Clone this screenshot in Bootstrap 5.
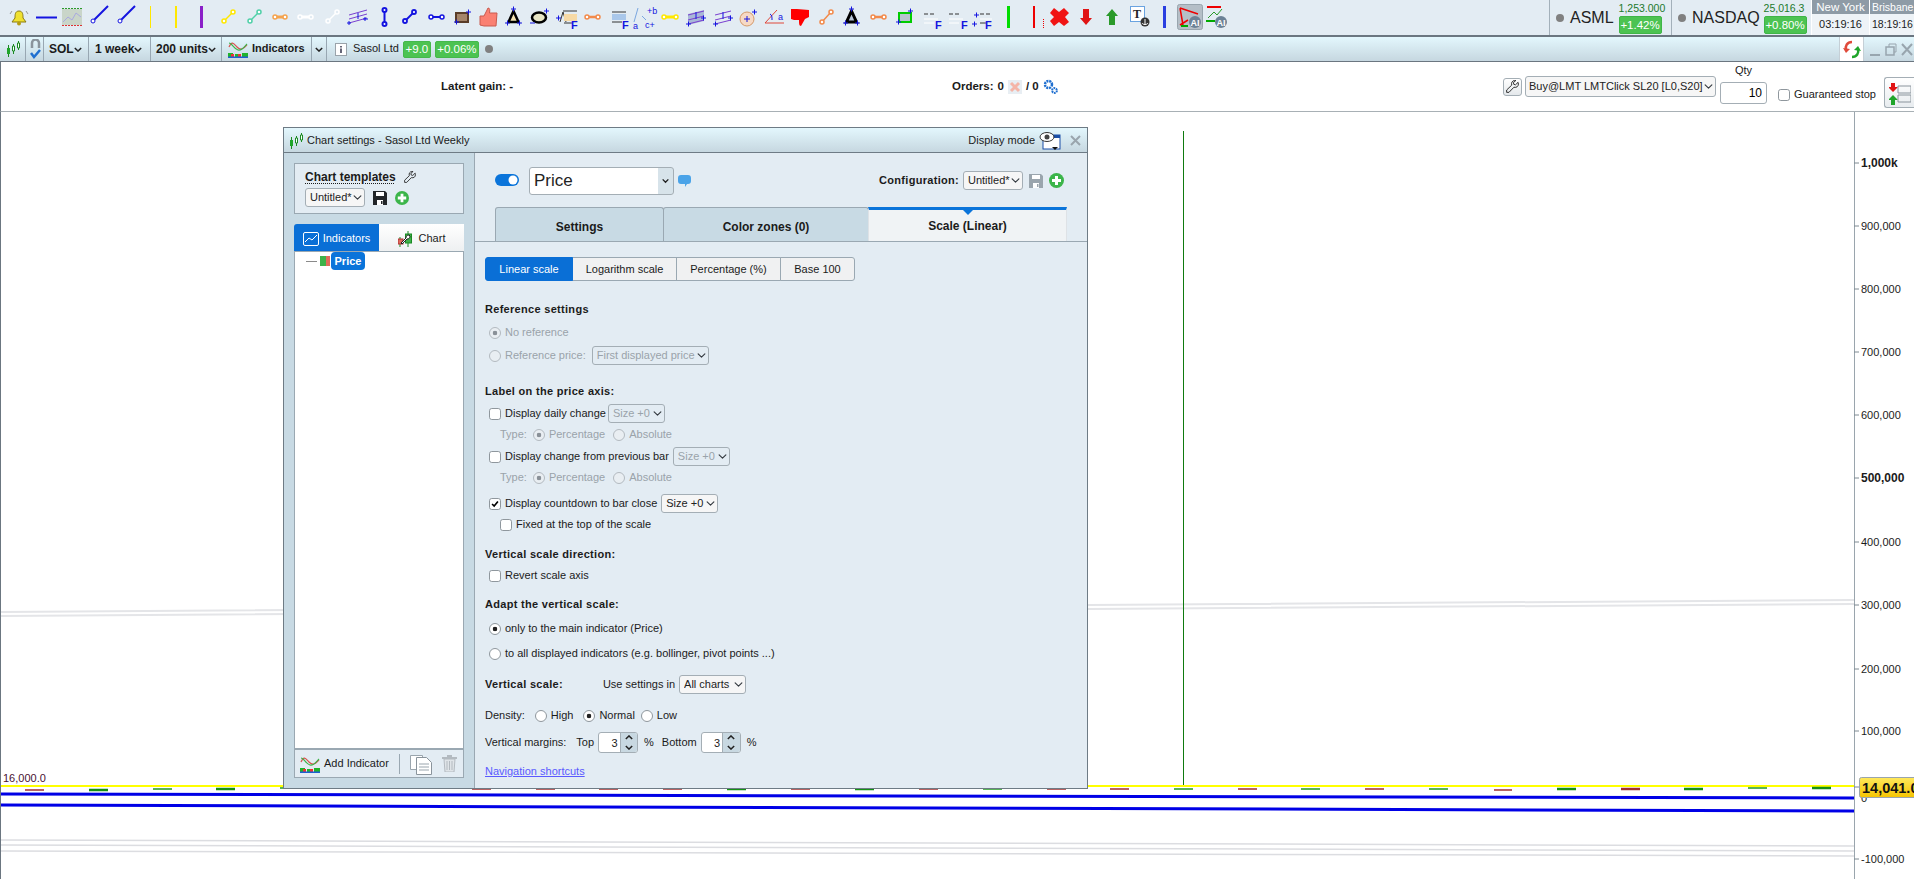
<!DOCTYPE html>
<html lang="en">
<head>
<meta charset="utf-8">
<title>Chart settings</title>
<link href="https://cdn.jsdelivr.net/npm/bootstrap@5.3.0/dist/css/bootstrap.min.css" rel="stylesheet">
<style>
html,body{height:100%;}
body{width:1914px;height:879px;overflow:hidden;background:#fff;font:11px/1.2 "Liberation Sans",Arial,sans-serif;color:#1b1b1b;}
svg{display:block;flex:none;}
.tools{height:37px;background:#e3ecf3;border-bottom:2px solid #6b7680;}
.tick-cell{height:35px;border-left:1px solid #a3b0ba;flex:none;}
.tc1{width:122px}.tc2{width:140px}
.t-dot{width:8px;height:8px;border-radius:50%;background:#808080;flex:none;margin-left:6px;margin-right:6px;}
.t-name{font-size:16px;color:#222;margin-right:5px;}
.t-name2{margin-right:4px;}
.t-stack{width:43px;}
.t-price{font-size:10.5px;color:#1d7a2c;line-height:15px;white-space:nowrap;}
.t-up{background:#4cc352;color:#fff;border:1px solid #3fb547;border-radius:2px;text-align:center;white-space:nowrap;line-height:16px;font-size:11.5px;}
.ny{width:58px;flex:none;border-left:1px solid #fff;text-align:center;overflow:hidden;}
.ny-last{width:45px;text-align:left;background:#eef3f7;}
.ny-last .ny-h,.ny-last .ny-t{padding-left:2px;font-size:10.5px;}
.ny-h{height:14px;background:#8e9ba6;color:#fff;line-height:14px;font-size:11.5px;white-space:nowrap;}
.ny-t{height:21px;background:#eef3f7;line-height:21px;font-size:11px;white-space:nowrap;}
.chartbar{height:25px;background:linear-gradient(#e3f7fd,#c6d7e0);border-bottom:1px solid #6b7680;}
.cb-cell{height:24px;border-right:1px solid #98a7b2;flex:none;white-space:nowrap;font-size:12px;}
.w26{width:26px;padding-left:7px}.w18{width:18px;padding-left:4px}.w45{width:45px;padding-left:5px}.w62{width:62px;padding-left:6px}.w71{width:71px;padding-left:5px}.w90{width:90px;padding-left:6px;font-size:11px;}.w15{width:15px;padding-left:3px}
.semi{font-weight:700;}
.up-badge{background:#4cc352;color:#fff;border:1px solid #44b84b;border-radius:2px;height:17px;line-height:15px;text-align:center;font-size:11.5px;}
.b28{width:28px}.b44{width:44px}
.ms6px{margin-left:6px!important}.ms8px{margin-left:8px!important}.ms2px{margin-left:2px!important}
.win-ref{width:25px;height:24px;background:#fff;border-left:1px solid #c5cfd6;border-right:1px solid #c5cfd6;}
.orderbar{height:50px;background:#fff;border-bottom:1px solid #a8b0b5;border-left:1px solid #6b7680;position:relative;font-size:11.5px;}
.ob-a{width:440px;flex:none}.ob-b{width:511px;flex:none}
.wr-btn{width:19px;height:18px;border:1px solid #a4aeb5;border-radius:3px;background:linear-gradient(#fff,#e4e8eb);margin-right:3px;}
.sel.sel-ord{width:191px;height:21px;font-size:11px;margin-right:4px;padding-left:3px;}
.qty-col{align-self:flex-start;margin-top:1px;}
.qty-l{line-height:14px;margin-bottom:5px;font-size:11px;}
.num{width:47px;height:22px;border:1px solid #a4aeb5;border-radius:3px;text-align:right;padding:0 4px;font-size:12px;}
.gs{font-size:11px;white-space:nowrap;width:110px;margin-left:7px;margin-top:16px;flex:none;}
.pos-btn{width:30px;height:31px;border:1px solid #a4aeb5;border-right:0;border-radius:3px 0 0 3px;background:linear-gradient(#fff,#e8ecef);align-self:flex-end;margin-bottom:3px;}
.plot{height:767px;position:relative;}
.dlg{left:283px;top:15px;width:805px;height:662px;border:1px solid #6e7b85;background:#e3ecf3;}
.dlg-title{height:25px;flex:none;background:linear-gradient(#e3f7fd,#c6d7e0);border-bottom:1px solid #6e7b85;padding:1px 6px 0;}
.dlg-left{width:191px;flex:none;background:#c8dae4;border-right:1px solid #9aa8b2;padding:10px;}
.tpl-box{height:51px;width:170px;background:#e3ecf3;border:1px solid #9aa8b2;padding:6px 10px;margin-bottom:10px;}
.tpl-t{font-weight:700;font-size:12px;text-decoration:underline dotted;text-underline-offset:2px;}
.lt-tab{width:85px;height:27px;background:linear-gradient(#fff,#eef0f1);padding-top:2px;}
.lt-on{background:#0a6fd6;color:#fff;border-radius:3px 0 0 0;}
.lt-tabs{border-bottom:1px solid #9aa8b2;width:170px;border-radius:3px 3px 0 0;}
.tree{width:170px;background:#fff;border:1px solid #9aa8b2;border-top:0;padding-left:11px;min-height:0;}
.t-pill{background:#0a74da;color:#fff;font-weight:700;border-radius:4px;height:18px;line-height:18px;width:34px;margin-left:1px;text-align:center;font-size:11px;}
.swatch{width:10px;height:10px;background:linear-gradient(90deg,#3eb24a 60%,#e26a5c 60%);}
.t-dash{width:11px;height:1px;background:#8a8a8a;margin-right:3px;}
.foot-bar{width:170px;height:29px;flex:none;background:#e3ecf3;border:1px solid #9aa8b2;padding-left:5px;}
.sep-v{width:1px;height:20px;background:#9aa8b2;flex:none;}
.dlg-right{min-width:0;}
.head-row{height:54px;padding:1px 0 0 20px;}
.form-switch .sw{width:24px;height:12px;margin:0;background-color:#0a74da;border:0;float:none;border-radius:6px;}
.form-switch.sw-wrap{padding:0;min-height:0;margin:0;}
.sel{height:19px;padding:0 11px 0 4px;font-size:11px;line-height:17px;border:1px solid #a4aeb5;border-radius:3px;background-color:#f6f6f6;background-position:right 2px center;background-size:9px;color:#222;}
.sel:disabled{background-color:#e3ecf3;color:#9aa3aa;}
.sel-p{width:145px;height:28px;font-size:17px;padding:0 0 0 4px;line-height:26px;background-color:#fff;background-image:url("data:image/svg+xml,%3csvg xmlns='http://www.w3.org/2000/svg' viewBox='0 0 16 16'%3e%3cpath fill='none' stroke='%23222' stroke-width='2.5' d='m3 6 5 5 5-5'/%3e%3c/svg%3e"),linear-gradient(#d7e3ea,#d7e3ea);background-repeat:no-repeat;background-size:9px,15px 26px;background-position:right 3px center,right 0 center;}
.w60{width:60px}.w117{width:117px}.w57{width:57px}.w67{width:67px}
.tabs-x{padding-left:20px;border-bottom:1px solid #9aa8b2;flex-wrap:nowrap;--bs-nav-tabs-border-width:0;--bs-nav-tabs-border-radius:0;height:35px;}
.tabs-x .nav-link{height:34px;margin:0;padding:0;line-height:38px;text-align:center;font-weight:700;font-size:12px;color:#1b1b1b;background:#c8dae4;border:1px solid #9aa8b2;border-bottom:0;border-radius:3px 3px 0 0;}
.tabs-x .nav-link.active{background:#f0f3f5;border-top:3px solid #0a74da;line-height:32px;position:relative;border-radius:0;color:#1b1b1b;}
.tabs-x .nav-link.active::after{content:"";position:absolute;left:50%;top:0;margin-left:-5px;border:5px solid transparent;border-top-color:#0a74da;border-bottom:0;}
.tw1{width:169px}.tw2{width:206px;margin-left:-1px!important}.tw3{width:199px;margin-left:-1px!important}
.pane{padding:15px 0 0 10px;}
.sub .btn{--bs-btn-padding-y:0;--bs-btn-padding-x:0;--bs-btn-font-size:11px;--bs-btn-line-height:22px;--bs-btn-border-radius:3px;--bs-btn-color:#1b1b1b;--bs-btn-bg:#f0f1f2;--bs-btn-border-color:#9aa8b2;--bs-btn-active-bg:#0a6fd6;--bs-btn-active-color:#fff;--bs-btn-active-border-color:#0a6fd6;height:24px;flex:none;}
.sb1{width:88px}.sb2{width:105px}.sb3{width:105px}.sb4{width:75px}
.rw{height:20px;white-space:nowrap;padding-top:1px;}
.hd{font-weight:700;font-size:11px;letter-spacing:.3px;}
.dim{color:#9aa3aa;}
.form-check-input.ck{width:12px;height:12px;margin:0 4px 0 4px;flex:none;border:1px solid #8f979d;background-color:#fff;float:none;}
.form-check-input.ck:disabled{opacity:1;border-color:#b3bac0;background-color:#e9eef2;}
.form-check-input.ck:checked[type=radio]{background-image:none;background:radial-gradient(circle,#222 0 2px,#fff 2.6px);border-color:#8f979d;}
.form-check-input.ck:disabled:checked[type=radio]{background:radial-gradient(circle,#8a9198 0 2px,#e9eef2 2.6px);border-color:#b3bac0;}
.form-check-input.ck:checked[type=checkbox]{background-color:#fff;border-color:#8f979d;background-image:url("data:image/svg+xml,%3csvg xmlns='http://www.w3.org/2000/svg' viewBox='0 0 12 12'%3e%3cpath fill='none' stroke='%23000' stroke-width='2' d='M2.5 6l2.5 2.5 4.5-5.5'/%3e%3c/svg%3e");}
.ind1{padding-left:15px}.ind2{padding-left:11px}
.g1{margin-top:1px}.g2{margin-top:2px}.g3{margin-top:3px}.g4{margin-top:4px}.g5{margin-top:5px}.g6{margin-top:6px}.g7{margin-top:7px}.g9{margin-top:9px}.g10{margin-top:10px}.g11{margin-top:11px}.g16{margin-top:16px}.g18{margin-top:18px}
.ms10px{margin-left:10px!important}.ms40px{margin-left:40px}
.me23{margin-right:23px}
.spin{width:40px;height:21px;border:1px solid #a4aeb5;border-radius:3px;background:#fff;margin:0 6px 0 4px;overflow:hidden;}
.spin-v{width:21px;text-align:right;padding-right:2px;line-height:21px;}
.spin-b{width:18px;background:#c8d8e1;border-left:1px solid #a4aeb5;}
.flip-y{transform:scaleY(-1);}
.nav-s{color:#5a5aff;text-decoration:underline;}
.sv-dim{color:#9aa5ad;}
</style>
</head>
<body>
<svg width="0" height="0" class="position-absolute">
<defs>
<symbol id="save" viewBox="0 0 14 14"><path fill="currentColor" d="M0 0h12l2 2v12H0z"/><path fill="#fff" d="M3 1h8v4H3zM4 9h6v5H4z"/><path fill="currentColor" d="M8 10h1.500v3H8z"/></symbol>
<symbol id="plus" viewBox="0 0 15 15"><circle cx="7.500" cy="7.500" r="7.500" fill="#3cb54a"/><path fill="#fff" d="M6 3h3v3h3v3H9v3H6V9H3V6h3z"/></symbol>
<symbol id="wrench" viewBox="0 0 14 14"><path fill="none" stroke="#222" d="M13 2.500l-2.800 2.700-1.900-.6-.2-2 2.500-2C8.500 0 6.300 1.300 6 3.500l.2 2L.7 10.800v2.500h2.500l5.300-5.500 2 .1C12.800 7.600 14 5 13 2.500z"/></symbol>
<symbol id="indic" viewBox="0 0 20 18"><path fill="none" stroke="#d9534f" stroke-width="1.200" d="M1 7c3-7 5-3 8 0s6 3 10-2"/><path fill="none" stroke="#3eb24a" stroke-width="1.200" d="M1 3c3 0 5 6 9 7s6-3 9-6"/><path fill="#1fb32b" d="M0 13h5v4H0zM7 14h6v3H7zM14 13h6v4h-6z"/><path fill="#e33" d="M3 14h3v3H3zM10 14h3v3h-3z"/><path fill="#1f5fd0" d="M0 16.500h20V18H0z"/></symbol>
<symbol id="candles" viewBox="0 0 13 16"><path stroke="#1a8a22" d="M1.500 4v12M6.500 3v10M11.500 0v9" fill="none"/><path fill="#1fa52a" d="M0 7h3v6H0z"/><path fill="#fff" stroke="#1a8a22" d="M5.500 5h2v5h-2zM10.500 2h2v5h-2z"/></symbol>
<symbol id="chev" viewBox="0 0 10 6"><path fill="none" stroke="#222" stroke-width="1.800" d="M1 1l4 4 4-4"/></symbol>
</defs>
</svg>

<div class="tools d-flex">
 <svg width="8" height="35"></svg>
 <svg width="24" height="35" viewBox="8 0 24 35"><path d="M19 11c-4 0-4 4-4 7l-3 4h14l-3-4c0-3 0-7-4-7z" fill="#f0e130" stroke="#8a7a10"/><circle cx="19" cy="23.500" r="2" fill="#b59b10"/><path d="M12 11l-2 3M26 11l2 3" stroke="#999" fill="none"/></svg>
 <svg width="28" height="35" viewBox="32 0 28 35"><path d="M36 17.500h21" stroke="#1414e0" stroke-width="2"/></svg>
 <svg width="26" height="35" viewBox="60 0 26 35"><rect x="62" y="9" width="20" height="16" fill="#c9d5c9"/><path d="M62 8.500h20" stroke="#2a9a2a" stroke-dasharray="2 1"/><path d="M62 25.500h20" stroke="#d33" stroke-dasharray="2 1"/><path d="M63 22l5-5 4 3 4-7 5 4" stroke="#a9a9e0" fill="none"/></svg>
 <svg width="27" height="35" viewBox="86 0 27 35"><path d="M93 21L108 6" stroke="#1414e0" stroke-width="2"/><circle cx="93" cy="21" r="2" fill="#fff" stroke="#1414e0"/></svg>
 <svg width="27" height="35" viewBox="113 0 27 35"><path d="M120 21L135 6" stroke="#1414e0" stroke-width="2"/><circle cx="120" cy="21" r="2" fill="#fff" stroke="#1414e0"/></svg>
 <svg width="25" height="35" viewBox="140 0 25 35"><path d="M150.500 6v22" stroke="#ffe800"/></svg>
 <svg width="25" height="35" viewBox="165 0 25 35"><path d="M176 6v22" stroke="#ffe800" stroke-width="2"/></svg>
 <svg width="25" height="35" viewBox="190 0 25 35"><path d="M201.500 6v22" stroke="#8a1fc8" stroke-width="3"/></svg>
 <svg width="27" height="35" viewBox="215 0 27 35"><g stroke="#ffe800" stroke-width="1.500" fill="#fff"><path d="M224 21l9-9"/><circle cx="224" cy="21" r="2"/><circle cx="233" cy="12" r="2"/></g></svg>
 <svg width="25" height="35" viewBox="242 0 25 35"><g stroke="#4fd0a8" stroke-width="1.500" fill="#fff"><path d="M250 21l9-9"/><circle cx="250" cy="21" r="2"/><circle cx="259" cy="12" r="2"/></g></svg>
 <svg width="25" height="35" viewBox="267 0 25 35"><g stroke="#f5a34d" stroke-width="1.500" fill="#fff"><path d="M275 17h10" stroke-width="3"/><circle cx="275" cy="17" r="2"/><circle cx="285" cy="17" r="2"/></g></svg>
 <svg width="28" height="35" viewBox="292 0 28 35"><g stroke="#fff" stroke-width="1.500" fill="#e3ecf3"><path d="M300 17h11" stroke-width="3"/><circle cx="300" cy="17" r="2"/><circle cx="311" cy="17" r="2"/></g></svg>
 <svg width="24" height="35" viewBox="320 0 24 35"><g stroke="#fff" stroke-width="1.500" fill="#e3ecf3"><path d="M328 21l9-9"/><circle cx="328" cy="21" r="2"/><circle cx="337" cy="12" r="2"/></g></svg>
 <svg width="32" height="35" viewBox="344 0 32 35"><path d="M349 15l18-5M349 19l18-5M349 23l18-5" stroke="#7a3fd0" fill="none"/><path d="M349 21v4M347 23h4M365 17v4M363 19h5M358 13v6" stroke="#1414e0" fill="none"/></svg>
 <svg width="21" height="35" viewBox="376 0 21 35"><g stroke="#1414e0" stroke-width="2" fill="#fff"><path d="M384.500 10v14"/><circle cx="384.500" cy="10" r="2"/><circle cx="384.500" cy="24" r="2"/></g></svg>
 <svg width="26" height="35" viewBox="397 0 26 35"><g stroke="#1414e0" stroke-width="1.800" fill="#fff"><path d="M405 21l9-9"/><circle cx="405" cy="21" r="2"/><circle cx="414" cy="12" r="2"/></g></svg>
 <svg width="27" height="35" viewBox="423 0 27 35"><g stroke="#1414e0" stroke-width="1.500" fill="#fff"><path d="M431 17h11" stroke-width="2"/><circle cx="431" cy="17" r="2"/><circle cx="442" cy="17" r="2"/></g></svg>
 <svg width="26" height="35" viewBox="450 0 26 35"><rect x="456" y="13" width="12" height="9" fill="#a5856a" stroke="#5a3d28" stroke-width="2"/><path d="M454 22h5M456.500 19.500v5M466 12h5M468.500 9.500v5" stroke="#1414e0" fill="none"/></svg>
 <svg width="25" height="35" viewBox="476 0 25 35"><path d="M480 16h4l4-8c2 0 2 2 1.500 5H497l-1 13H484l-4-1z" fill="#fa8072" stroke="#c95a4e"/></svg>
 <svg width="25" height="35" viewBox="501 0 25 35"><path d="M513.500 11l-5 11h10z" fill="#f4e3b2" stroke="#000" stroke-width="2.500"/><path d="M511 9h5M513.500 6.500v5M505 23h5M507.500 20.500v5M517 23h5M519.500 20.500v5" stroke="#1414e0" fill="none"/></svg>
 <svg width="27" height="35" viewBox="526 0 27 35"><ellipse cx="539" cy="17.500" rx="7" ry="5" fill="#e8e6c5" stroke="#000" stroke-width="2.500"/><path d="M544 11h5M546.500 8.500v5M530 23h5" stroke="#1414e0" fill="none"/></svg>
 <svg width="28" height="35" viewBox="553 0 28 35"><path d="M560 22l3-10 3 10" stroke="#333" fill="none"/><path d="M563 11h14" stroke="#333"/><rect x="564" y="14" width="13" height="7" fill="#f6d9a5"/><path d="M564 23h8" stroke="#333"/><path d="M556 18h5M558.500 15.500v5" stroke="#1414e0"/><text x="571" y="29" font-size="11" font-weight="700" fill="#1414e0">F</text></svg>
 <svg width="26" height="35" viewBox="581 0 26 35"><g stroke="#f28a4b" stroke-width="1.500" fill="#fff"><path d="M587 17h11" stroke-width="2.500"/><circle cx="587" cy="17" r="2"/><circle cx="598" cy="17" r="2"/></g></svg>
 <svg width="24" height="35" viewBox="607 0 24 35"><path d="M612 12h14M612 22h10" stroke="#333"/><rect x="612" y="14" width="14" height="6" fill="#a9c7ea"/><text x="622" y="29" font-size="11" font-weight="700" fill="#1414e0">F</text></svg>
 <svg width="27" height="35" viewBox="631 0 27 35"><path d="M638 8l-4 14M642 16l4 4" stroke="#7aa7e0" fill="none"/><text x="633" y="29" font-size="9" fill="#1414e0">a</text><text x="647" y="14" font-size="9" fill="#1414e0">+b</text><text x="645" y="28" font-size="9" fill="#1414e0">c+</text></svg>
 <svg width="24" height="35" viewBox="658 0 24 35"><g stroke="#ffe800" stroke-width="1.500" fill="#fff"><path d="M664 17h12" stroke-width="3"/><circle cx="664" cy="17" r="2"/><circle cx="676" cy="17" r="2"/></g></svg>
 <svg width="27" height="35" viewBox="682 0 27 35"><path d="M688 14l16-4v11l-16 4z" fill="#a8b7d8"/><path d="M688 15l16-4M688 20l16-4M688 24l16-4" stroke="#7a3fd0" fill="none"/><path d="M686 24h5M688.500 21.500v5M701 18h5M703.500 15.500v5M696 12v7" stroke="#1414e0" fill="none"/></svg>
 <svg width="27" height="35" viewBox="709 0 27 35"><path d="M715 15l16-4M715 20l16-4M715 24l16-4" stroke="#7a3fd0" fill="none"/><path d="M713 24h5M715.500 21.500v5M728 18h5M730.500 15.500v5M723 12v7" stroke="#1414e0" fill="none"/></svg>
 <svg width="24" height="35" viewBox="736 0 24 35"><circle cx="747" cy="19" r="7" fill="#f6d9c5" stroke="#d59a6a"/><path d="M744 19h6M747 16v6M752 12h5M754.500 9.500v5" stroke="#1414e0" fill="none"/></svg>
 <svg width="28" height="35" viewBox="760 0 28 35"><path d="M765 23l12-13M765 23h19" stroke="#e0483a" fill="none"/><path d="M772 20c0-3 0-5-2-6" stroke="#1414e0" fill="none"/><text x="778" y="20" font-size="9" fill="#1414e0">a</text></svg>
 <svg width="27" height="35" viewBox="788 0 27 35"><path d="M791 9h6l12 1 0 7-4 2-4 7c-2 0-2-3-2-6h-5l-3-1z" fill="#f00"/></svg>
 <svg width="24" height="35" viewBox="815 0 24 35"><g stroke="#f28a4b" stroke-width="1.500" fill="#fff"><path d="M822 22l9-10"/><circle cx="822" cy="22" r="2"/><circle cx="831" cy="12" r="2"/></g></svg>
 <svg width="27" height="35" viewBox="839 0 27 35"><path d="M851.500 11l-5 11h10z" fill="#b9c7d8" stroke="#000" stroke-width="3"/><path d="M849 9h5M851.500 6.500v5M843 23h5M845.500 20.500v5M855 23h5M857.500 20.500v5" stroke="#1414e0" fill="none"/></svg>
 <svg width="26" height="35" viewBox="866 0 26 35"><g stroke="#f28a4b" stroke-width="1.500" fill="#fff"><path d="M873 17h11" stroke-width="2.500"/><circle cx="873" cy="17" r="2"/><circle cx="884" cy="17" r="2"/></g></svg>
 <svg width="28" height="35" viewBox="892 0 28 35"><rect x="899" y="13" width="12" height="9" fill="#b8c4cf" stroke="#0c0" stroke-width="2"/><path d="M896 22h5M898.500 19.500v5M908 11h5M910.500 8.500v5" stroke="#1414e0" fill="none"/></svg>
 <svg width="26" height="35" viewBox="920 0 26 35"><path d="M924 14h4M930 14h4" stroke="#333"/><path d="M924 19h14M924 23h10" stroke="#fff"/><text x="935" y="29" font-size="11" font-weight="700" fill="#1414e0">F</text></svg>
 <svg width="23" height="35" viewBox="946 0 23 35"><path d="M949 14h4M955 14h4" stroke="#333"/><path d="M949 19h14M949 23h10" stroke="#fff"/><text x="961" y="29" font-size="11" font-weight="700" fill="#1414e0">F</text></svg>
 <svg width="29" height="35" viewBox="969 0 29 35"><path d="M980 14h4M986 14h4M980 23h6" stroke="#333"/><path d="M980 19h12" stroke="#fff"/><path d="M972 24h5M974.500 21.500v5M974 15h5M976.500 12.500v5" stroke="#1414e0"/><text x="985" y="29" font-size="11" font-weight="700" fill="#1414e0">F</text></svg>
 <svg width="26" height="35" viewBox="998 0 26 35"><path d="M1008.500 6v22" stroke="#0d0" stroke-width="3"/></svg>
 <svg width="25" height="35" viewBox="1024 0 25 35"><path d="M1034 6v22" stroke="#e00" stroke-width="2"/><path d="M1043.500 19v9" stroke="#e00" stroke-dasharray="1 1"/></svg>
 <svg width="26" height="35" viewBox="1049 0 26 35"><path d="M1054 8l5 4 5-4 5 5-4 4 4 5-5 4-5-4-5 4-4-5 4-4-4-4z" fill="#f01414"/></svg>
 <svg width="26" height="35" viewBox="1075 0 26 35"><path d="M1083 9h6v9h3l-6 7-6-7h3z" fill="#e01414"/></svg>
 <svg width="25" height="35" viewBox="1101 0 25 35"><path d="M1109 25h6v-9h3l-6-7-6 7h3z" fill="#2a9a2a"/></svg>
 <svg width="29" height="35" viewBox="1126 0 29 35"><rect x="1130.500" y="6.500" width="14" height="15" fill="#fff" stroke="#6aa3e0"/><text x="1133" y="18" font-size="12" font-weight="700" font-family="Liberation Serif" fill="#222">T</text><circle cx="1145" cy="22" r="4.500" fill="#333"/><path d="M1145 19v6M1142 23c1 2 5 2 6 0" stroke="#fff" fill="none"/></svg>
 <svg width="22" height="35" viewBox="1155 0 22 35"><path d="M1164.500 6v22" stroke="#2a3fe0" stroke-width="3"/></svg>
 <svg width="27" height="35" viewBox="1177 0 27 35"><rect x="1177.500" y="4.500" width="25" height="25" rx="2" fill="#b5bfc7" stroke="#98a5ae"/><path d="M1180 8l18 6M1180 8l3 17M1180 25l8-5" stroke="#e00" fill="none" stroke-width="1.500"/><path d="M1181 26h7" stroke="#0a0" stroke-width="2"/><circle cx="1195" cy="22" r="6" fill="#6c8296"/><text x="1190.500" y="25.500" font-size="9" font-weight="700" fill="#fff">AI</text></svg>
 <svg width="26" height="35" viewBox="1204 0 26 35"><path d="M1207 7h14" stroke="#e00" stroke-width="2"/><path d="M1208 18l6-6 3 3 5-6" stroke="#2a9a2a" fill="none"/><path d="M1206 21h9" stroke="#0a0" stroke-width="2"/><circle cx="1221" cy="22" r="6" fill="#6c8296"/><text x="1216.500" y="25.500" font-size="9" font-weight="700" fill="#fff">AI</text></svg>
 <div class="flex-grow-1"></div>
 <div class="tick-cell tc1 d-flex align-items-center">
  <span class="t-dot"></span><span class="t-name">ASML</span>
  <div class="t-stack"><div class="t-price">1,253.000</div><div class="t-up">+1.42%</div></div>
 </div>
 <div class="tick-cell tc2 d-flex align-items-center">
  <span class="t-dot"></span><span class="t-name t-name2">NASDAQ</span>
  <div class="t-stack"><div class="t-price">25,016.3</div><div class="t-up">+0.80%</div></div>
 </div>
 <div class="ny"><div class="ny-h">New York</div><div class="ny-t">03:19:16</div></div>
 <div class="ny ny-last"><div class="ny-h">Brisbane</div><div class="ny-t">18:19:16</div></div>
</div>

<div class="chartbar d-flex align-items-center">
 <div class="cb-cell d-flex align-items-center w26"><svg width="13" height="16"><use href="#candles"/></svg></div>
 <div class="cb-cell d-flex align-items-center w18"><svg width="11" height="20" viewBox="0 0 11 20"><path d="M2 9V4a3.500 3.500 0 0 1 7 0v5" fill="none" stroke="#8a949c" stroke-width="2.500"/><path d="M1 14l3 4 6-7" fill="none" stroke="#1f6fd0" stroke-width="2.500"/></svg></div>
 <div class="cb-cell d-flex align-items-center justify-content-between w45 pe-2 semi">SOL<svg width="8" height="5"><use href="#chev"/></svg></div>
 <div class="cb-cell d-flex align-items-center justify-content-between w62 pe-2 semi">1 week<svg width="8" height="5"><use href="#chev"/></svg></div>
 <div class="cb-cell d-flex align-items-center justify-content-between w71 pe-2 semi">200 units<svg width="8" height="5"><use href="#chev"/></svg></div>
 <div class="cb-cell d-flex align-items-center gap-1 w90 semi"><svg width="20" height="18"><use href="#indic"/></svg>Indicators</div>
 <div class="cb-cell d-flex align-items-center w15"><svg width="8" height="5"><use href="#chev"/></svg></div>
 <svg class="ms-2" width="12" height="13" viewBox="0 0 12 13"><rect x=".5" y=".5" width="11" height="12" fill="#fff" stroke="#9aa3aa"/><path d="M5 3h2v1.500H5zM5 5.500h2V10H5z" fill="#667"/></svg>
 <span class="ms6px">Sasol Ltd</span>
 <span class="up-badge b28 ms-1">+9.0</span>
 <span class="up-badge b44 ms-1">+0.06%</span>
 <span class="t-dot"></span>
 <div class="flex-grow-1"></div>
 <div class="win-ref d-flex align-items-center justify-content-center"><svg width="18" height="19" viewBox="0 0 18 19"><path d="M9 2C4 2 2 6 3 10" fill="none" stroke="#e04a3a" stroke-width="2.500"/><path d="M0 8l3 5 4-4z" fill="#e04a3a"/><path d="M9 17c5 0 7-4 6-8" fill="none" stroke="#1fa52a" stroke-width="2.500"/><path d="M18 11l-3-5-4 4z" fill="#1fa52a"/></svg></div>
 <svg width="50" height="24" viewBox="0 0 50 24"><path d="M6 18h10" stroke="#98a5ae" stroke-width="2"/><rect x="22" y="10" width="8" height="8" fill="none" stroke="#98a5ae" stroke-width="1.500"/><path d="M25 10V7h7v8h-2" fill="none" stroke="#98a5ae"/><path d="M38 7l10 11M48 7L38 18" stroke="#98a5ae" stroke-width="2"/></svg>
</div>

<div class="orderbar d-flex align-items-center">
 <div class="ob-a"></div>
 <div class="ob-b semi">Latent gain: -</div>
 <div class="semi">Orders:</div>
 <span class="semi ms-1">0</span>
 <svg class="ms-1" width="14" height="14" viewBox="0 0 14 14"><rect width="14" height="14" fill="#e8eef3"/><path d="M3 3l8 8M11 3l-8 8" stroke="#f4b5a8" stroke-width="3"/></svg>
 <span class="semi ms-1">/ 0</span>
 <svg class="ms-1" width="15" height="15" viewBox="0 0 15 15"><circle cx="5.500" cy="5.500" r="3.500" fill="none" stroke="#1f6fd0" stroke-width="2.500" stroke-dasharray="2 .8"/><circle cx="11.500" cy="11.500" r="2.400" fill="none" stroke="#1f6fd0" stroke-width="2" stroke-dasharray="1.600 .7"/></svg>
 <div class="flex-grow-1"></div>
 <button class="wr-btn d-flex align-items-center justify-content-center p-0"><svg width="13" height="13"><use href="#wrench"/></svg></button>
 <select class="form-select sel sel-ord"><option>Buy@LMT LMTClick SL20 [L0,S20]</option></select>
 <div class="qty-col d-flex flex-column align-items-center"><div class="qty-l">Qty</div><input class="num" value="10"></div>
 <div class="gs d-flex align-items-center"><input type="checkbox" class="form-check-input ck"><span>Guaranteed stop</span></div>
 <button class="pos-btn p-0 d-flex align-items-center justify-content-center"><svg width="22" height="26" viewBox="0 0 22 26"><path d="M2 3h4v4h3l-5 5-5-5h3z" fill="#e01414"/><path d="M2 25h4v-5h3l-5-5-5 5h3z" fill="#1fa52a"/><path d="M9 6h13v7H9zM9 15h13v7H9z" fill="none" stroke="#8a949c"/></svg></button>
</div>

<div class="plot">
 <svg width="1914" height="767" viewBox="0 112 1914 767" class="position-absolute top-0 start-0">
  <defs><linearGradient id="gold" x1="0" y1="0" x2="0" y2="1"><stop offset="0" stop-color="#ffe95c"/><stop offset="1" stop-color="#f5c400"/></linearGradient></defs>
  <path d="M.5 112v767" stroke="#6b7680"/>
  <path d="M1 612L1854 600M1 616L1854 604" stroke="#e4e5e8" stroke-width="2"/>
  <path d="M1 840L1854 846M1 845L1854 851M1 851L1854 856" stroke="#dcdde1" stroke-width="1.500"/>
  <path d="M1183.500 131V785" stroke="#0f7a0f"/>
  <path d="M1 786H1854" stroke="#ff0" stroke-width="2"/>
  <g stroke-width="1.500">
   <path stroke="#a03030" d="M25 790h19M472 789h19M536 789h19M599 789h19M663 789h19M791 789h19M919 789h19M1047 789h19M1110 789h19M1238 789h19M1365 789h19M1494 790h18"/>
   <path stroke="#229a22" d="M153 789h19M280 788h19M983 789h19M1174 789h19M1301 789h19M1429 789h19M1748 788h19"/>
  </g>
  <g stroke-width="2.500">
   <path stroke="#a03030" d="M1621 789h19"/>
   <path stroke="#159015" d="M89 790h19M216 789h19M727 789h19M855 789h19M1557 789h19M1684 789h19M1812 788h19"/>
  </g>
  <path d="M1 794L1854 798" stroke="#0000e6" stroke-width="3"/>
  <path d="M1 805L1854 811" stroke="#0000e6" stroke-width="3"/>
  <path d="M1854.500 112V879" stroke="#9aa5ad"/>
  <g stroke="#7f8a92"><path d="M1854 163h5M1854 226h5M1854 289h5M1854 352h5M1854 415h5M1854 478h5M1854 542h5M1854 605h5M1854 669h5M1854 731h5M1854 859h5M1854 787h6"/></g>
  <g font-size="11" fill="#1b1b1b" font-family="Liberation Sans">
   <text x="1861" y="167" font-weight="700" font-size="12">1,000k</text>
   <text x="1861" y="230">900,000</text>
   <text x="1861" y="293">800,000</text>
   <text x="1861" y="356">700,000</text>
   <text x="1861" y="419">600,000</text>
   <text x="1861" y="482" font-weight="700" font-size="12">500,000</text>
   <text x="1861" y="546">400,000</text>
   <text x="1861" y="609">300,000</text>
   <text x="1861" y="673">200,000</text>
   <text x="1861" y="735">100,000</text>
   <text x="1861" y="802">0</text>
   <text x="1861" y="863">-100,000</text>
   <text x="3" y="782" fill="#4a1230">16,000.0</text>
  </g>
  <rect x="1859.500" y="777.500" width="60" height="20" rx="2" fill="url(#gold)" stroke="#9aa5ad"/>
  <text x="1862" y="793" font-size="14.500" font-weight="700" font-family="Liberation Sans" fill="#111">14,041.0</text>
 </svg>

 <div class="dlg position-absolute d-flex flex-column">
  <div class="dlg-title d-flex align-items-center">
   <svg width="13" height="16"><use href="#candles"/></svg>
   <span class="ms-1">Chart settings - Sasol Ltd Weekly</span>
   <div class="flex-grow-1"></div>
   <span>Display mode</span>
   <svg class="ms-1" width="23" height="20" viewBox="0 0 23 20"><rect x="4" y="4" width="17" height="14" fill="#fff" stroke="#1a4fa8"/><path d="M4 4h17v3H4z" fill="#1a4fa8"/><path d="M13 16h6l-3 3z" fill="#111"/><ellipse cx="8" cy="6" rx="7" ry="4.500" fill="#fff" stroke="#333"/><circle cx="8" cy="6" r="2.500" fill="#444"/></svg>
   <svg class="ms-2" width="11" height="11" viewBox="0 0 11 11"><path d="M1 1l9 9M10 1l-9 9" stroke="#9aa5ad" stroke-width="2"/></svg>
  </div>
  <div class="d-flex flex-grow-1 overflow-hidden">
   <div class="dlg-left d-flex flex-column">
    <div class="tpl-box">
     <div class="d-flex align-items-center mb-1"><span class="tpl-t">Chart templates</span><svg class="ms-2" width="12" height="12"><use href="#wrench"/></svg></div>
     <div class="d-flex align-items-center"><select class="form-select sel w60"><option>Untitled*</option></select><svg class="ms-2 text-dark" width="14" height="14"><use href="#save"/></svg><svg class="ms-2" width="14" height="14"><use href="#plus"/></svg></div>
    </div>
    <div class="d-flex lt-tabs">
     <div class="lt-tab lt-on d-flex align-items-center justify-content-center gap-1"><svg width="16" height="14" viewBox="0 0 16 14"><rect x=".5" y=".5" width="15" height="13" rx="1.500" fill="none" stroke="#fff"/><path d="M2 10l4-4 3 2 5-5" fill="none" stroke="#fff"/></svg>Indicators</div>
     <div class="lt-tab d-flex align-items-center justify-content-center gap-1"><svg width="17" height="16" viewBox="0 0 17 16"><path d="M10 0v16M2 6v10" stroke="#1a8a22"/><rect x="7.500" y="3" width="6" height="9" fill="#3eb24a" stroke="#1a8a22"/><rect x="0" y="8" width="5" height="5" fill="#e26a5c" stroke="#a33"/><path d="M11 4c-2 0-3 1-3 3l-5 5 1 1 5-5c2 0 3-1 3-3z" fill="#fff" stroke="#222"/></svg>Chart</div>
    </div>
    <div class="tree flex-grow-1">
     <div class="d-flex align-items-center"><span class="t-dash"></span><span class="swatch"></span><span class="t-pill">Price</span></div>
    </div>
    <div class="foot-bar d-flex align-items-center">
     <svg width="20" height="18"><use href="#indic"/></svg>
     <span class="ms-1">Add Indicator</span>
     <span class="sep-v ms10px"></span>
     <svg class="ms10px" width="22" height="22" viewBox="0 0 22 22"><path d="M.5 2.500h12v14H.5z" fill="#fff" stroke="#9aa5ad"/><path d="M6.500 4.500h10l5 5v12h-15z" fill="#fff" stroke="#8a949c"/><path d="M9 11h10M9 14h10M9 17h10" stroke="#9aa5ad"/></svg>
     <svg class="ms10px" width="15" height="17" viewBox="0 0 15 17"><path d="M2 4h11l-1 13H3z" fill="#dfe4e8" stroke="#b3bac0"/><path d="M0 3h15M5 1h5" stroke="#b3bac0" stroke-width="2"/><path d="M5 6v9M7.500 6v9M10 6v9" stroke="#b3bac0"/></svg>
    </div>
   </div>
   <div class="dlg-right flex-grow-1">
    <div class="head-row d-flex align-items-center">
     <div class="form-check form-switch sw-wrap"><input class="form-check-input sw" type="checkbox" role="switch" checked></div>
     <select class="form-select sel sel-p ms10px"><option>Price</option></select>
     <svg class="ms-1" width="13" height="12" viewBox="0 0 13 12"><path d="M3 0h7a3 3 0 0 1 3 3v3a3 3 0 0 1-3 3H9l-2 3v-3H3a3 3 0 0 1-3-3V3a3 3 0 0 1 3-3z" fill="#4aa3e8"/></svg>
     <div class="flex-grow-1"></div>
     <span class="hd">Configuration:</span>
     <select class="form-select sel w60 ms-1"><option>Untitled*</option></select>
     <svg class="ms6px sv-dim" width="14" height="14"><use href="#save"/></svg>
     <svg class="ms6px me23" width="15" height="15"><use href="#plus"/></svg>
    </div>
    <ul class="nav nav-tabs tabs-x">
     <li class="nav-item"><a class="nav-link tw1" href="#">Settings</a></li>
     <li class="nav-item"><a class="nav-link tw2" href="#">Color zones (0)</a></li>
     <li class="nav-item"><a class="nav-link active tw3" href="#">Scale (Linear)</a></li>
    </ul>
    <div class="pane">
     <div class="btn-group sub" role="group">
      <button class="btn active sb1">Linear scale</button>
      <button class="btn sb2">Logarithm scale</button>
      <button class="btn sb3">Percentage (%)</button>
      <button class="btn sb4">Base 100</button>
     </div>
     <div class="rw g18 hd d-flex align-items-center">Reference settings</div>
     <div class="rw g3 d-flex align-items-center dim"><input type="radio" class="form-check-input ck" checked disabled>No reference</div>
     <div class="rw g3 d-flex align-items-center dim"><input type="radio" class="form-check-input ck" disabled>Reference price:<select class="form-select sel w117 ms6px" disabled><option>First displayed price</option></select></div>
     <div class="rw g16 hd d-flex align-items-center">Label on the price axis:</div>
     <div class="rw g2 d-flex align-items-center"><input type="checkbox" class="form-check-input ck">Display daily change<select class="form-select sel w57 ms2px" disabled><option>Size +0</option></select></div>
     <div class="rw g1 d-flex align-items-center dim ind1">Type:<input type="radio" class="form-check-input ck ms6px" checked disabled>Percentage<input type="radio" class="form-check-input ck ms8px" disabled>Absolute</div>
     <div class="rw g2 d-flex align-items-center"><input type="checkbox" class="form-check-input ck">Display change from previous bar<select class="form-select sel w57 ms-1" disabled><option>Size +0</option></select></div>
     <div class="rw g1 d-flex align-items-center dim ind1">Type:<input type="radio" class="form-check-input ck ms6px" checked disabled>Percentage<input type="radio" class="form-check-input ck ms8px" disabled>Absolute</div>
     <div class="rw g6 d-flex align-items-center"><input type="checkbox" class="form-check-input ck" checked>Display countdown to bar close<select class="form-select sel w57 ms-1"><option>Size +0</option></select></div>
     <div class="rw g1 d-flex align-items-center ind2"><input type="checkbox" class="form-check-input ck">Fixed at the top of the scale</div>
     <div class="rw g10 hd d-flex align-items-center">Vertical scale direction:</div>
     <div class="rw g1 d-flex align-items-center"><input type="checkbox" class="form-check-input ck">Revert scale axis</div>
     <div class="rw g9 hd d-flex align-items-center">Adapt the vertical scale:</div>
     <div class="rw g4 d-flex align-items-center"><input type="radio" class="form-check-input ck" checked>only to the main indicator (Price)</div>
     <div class="rw g5 d-flex align-items-center"><input type="radio" class="form-check-input ck">to all displayed indicators (e.g. bollinger, pivot points ...)</div>
     <div class="rw g11 d-flex align-items-center"><span class="hd">Vertical scale:</span><span class="ms40px">Use settings in</span><select class="form-select sel w67 ms-1"><option>All charts</option></select></div>
     <div class="rw g11 d-flex align-items-center">Density:<input type="radio" class="form-check-input ck ms10px">High<input type="radio" class="form-check-input ck ms10px" checked>Normal<input type="radio" class="form-check-input ck ms6px">Low</div>
     <div class="rw g7 d-flex align-items-center">Vertical margins:<span class="ms10px">Top</span><div class="spin d-flex"><div class="spin-v">3</div><div class="spin-b d-flex flex-column align-items-center justify-content-around"><svg width="8" height="5" class="flip-y"><use href="#chev"/></svg><svg width="8" height="5"><use href="#chev"/></svg></div></div>%<span class="ms8px">Bottom</span><div class="spin d-flex"><div class="spin-v">3</div><div class="spin-b d-flex flex-column align-items-center justify-content-around"><svg width="8" height="5" class="flip-y"><use href="#chev"/></svg><svg width="8" height="5"><use href="#chev"/></svg></div></div>%</div>
     <div class="rw g9 d-flex align-items-center"><a class="nav-s" href="#">Navigation shortcuts</a></div>
    </div>
   </div>
  </div>
 </div>
</div>
<script src="https://cdn.jsdelivr.net/npm/bootstrap@5.3.0/dist/js/bootstrap.bundle.min.js"></script>
</body>
</html>
